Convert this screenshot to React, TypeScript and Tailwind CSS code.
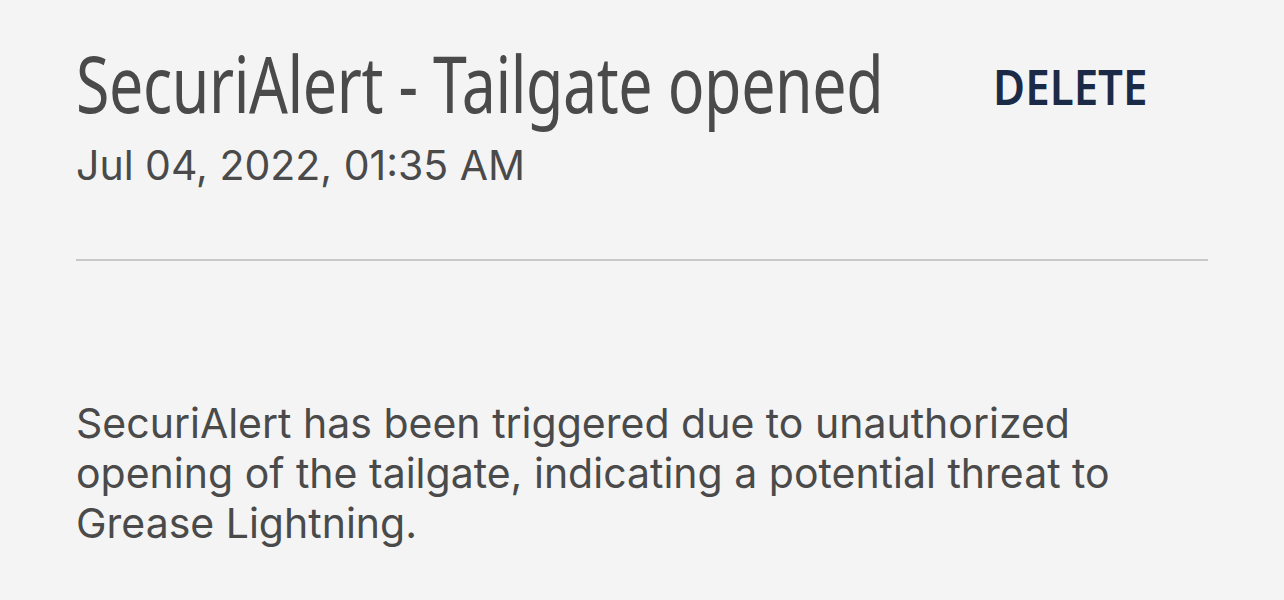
import { FC } from "react";

const App: FC = () => {
  return (
    <div className="min-h-screen w-full bg-[#f4f4f4] px-[76px] pt-[39px] text-[#4a4a4a]">
      <div className="flex items-start">
        <div className="w-[820px] shrink-0">
          <h1 className="origin-left scale-x-[0.78] font-['Noto_Sans',sans-serif] text-[78px] leading-[88px] font-normal tracking-[-0.5px] whitespace-nowrap">
            SecuriAlert - Tailgate opened
          </h1>
          <div className="mt-[14px] font-['Inter','Noto_Sans',sans-serif] text-[41px] leading-[48px]">
            Jul 04, 2022, 01:35 AM
          </div>
        </div>
        <button className="ml-auto mr-[60px] mt-[19px] origin-right scale-x-[0.895] font-['Noto_Sans',sans-serif] text-[49px] leading-[56px] font-semibold text-[#1b2a47]">
          DELETE
        </button>
      </div>
      <div className="mt-[70px] h-[2px] w-full bg-[#c8c8c8]" />
      <p className="mt-[137px] font-['Inter','Noto_Sans',sans-serif] text-[41px] leading-[50px]">
        SecuriAlert has been triggered due to unauthorized
        <br />
        opening of the tailgate, indicating a potential threat to
        <br />
        Grease Lightning.
      </p>
    </div>
  );
};

export default App;
